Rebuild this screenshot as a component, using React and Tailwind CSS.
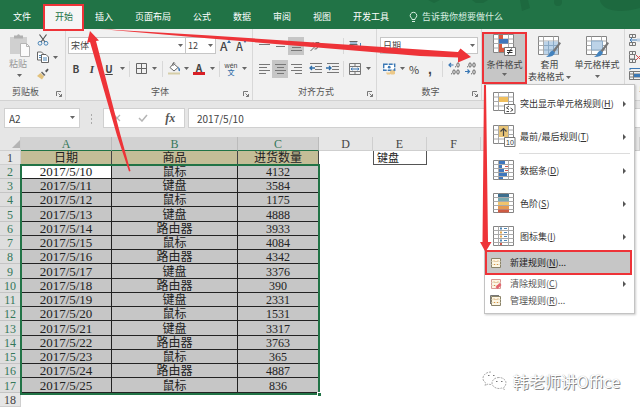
import React from "react";

const ROWS = [
  ["2017/5/10", "鼠标", "4132"],
  ["2017/5/11", "键盘", "3584"],
  ["2017/5/12", "鼠标", "1175"],
  ["2017/5/13", "键盘", "4888"],
  ["2017/5/14", "路由器", "3933"],
  ["2017/5/15", "鼠标", "4084"],
  ["2017/5/16", "路由器", "4342"],
  ["2017/5/17", "键盘", "3376"],
  ["2017/5/18", "路由器", "390"],
  ["2017/5/19", "键盘", "2331"],
  ["2017/5/20", "鼠标", "1531"],
  ["2017/5/21", "键盘", "3317"],
  ["2017/5/22", "路由器", "3763"],
  ["2017/5/23", "鼠标", "365"],
  ["2017/5/24", "路由器", "4887"],
  ["2017/5/25", "鼠标", "836"],
];

const TABS = ["插入", "页面布局", "公式", "数据", "审阅", "视图", "开发工具"];

/* ---------- small parts ---------- */

function Caret() {
  return (
    <svg width="5" height="3" viewBox="0 0 5 3" className="shrink-0" aria-hidden="true">
      <path d="M0 0h5L2.500 3z" fill="#666" />
    </svg>
  );
}

function CaretButton({ label }) {
  return (
    <button aria-label={label} className="flex h-4 w-2 shrink-0 items-center justify-center">
      <Caret />
    </button>
  );
}

function Tool({ label, active, wide, children }) {
  return (
    <button
      aria-label={label}
      className={`flex h-[18px] shrink-0 items-center justify-center ${wide ? "w-[18px]" : "w-4"} ${active ? "bg-[#c6c6c6]" : ""}`}
    >
      {children}
    </button>
  );
}

function Sep({ wide }) {
  return (
    <span className={`flex h-4 shrink-0 justify-center ${wide ? "w-2" : "w-1.5"}`}>
      <span className="w-px bg-[#d8d8d8]" />
    </span>
  );
}

function Launcher({ label }) {
  return (
    <button aria-label={label} className="absolute right-[3px] bottom-[3px]">
      <svg width="6" height="6" viewBox="0 0 6 6" fill="none" stroke="#777">
        <path d="M.5 5V.5H5M2.500 2.500l3 3M5.500 3v2.500H3" />
      </svg>
    </button>
  );
}

function Group({ title, className, children }) {
  return (
    <section className={`relative flex shrink-0 flex-col border-r border-[#d8d8d8] ${className}`}>
      {children}
      <div className="flex h-5 items-center justify-center pt-1 text-[#555]">{title}</div>
      <Launcher label={title + "设置"} />
    </section>
  );
}

function Row({ children }) {
  return <div className="flex h-[23px] items-center">{children}</div>;
}

function Dropdown({ label, value, className }) {
  return (
    <div className={`relative shrink-0 ${className}`}>
      <select
        aria-label={label}
        defaultValue={value}
        className="h-[17px] w-full appearance-none border border-[#c6c6c6] bg-white pl-0.5 leading-[14px] text-[#444]"
      >
        <option>{value}</option>
      </select>
      <span className="pointer-events-none absolute top-[7px] right-[3px]">
        <Caret />
      </span>
    </div>
  );
}

/* ---------- ribbon drawings ---------- */

function Lines({ d, h = 10 }) {
  return (
    <svg width="11" height={h} viewBox={`0 0 11 ${h}`} stroke="#777" fill="none" aria-hidden="true">
      <path d={d} />
    </svg>
  );
}

function PasteIcon() {
  return (
    <svg width="22" height="24" viewBox="0 0 22 24" aria-hidden="true">
      <path d="M1 3h17v17H1z" fill="#d0d0d0" />
      <path d="M5 3V1.500h3Q9.500-.8 11 1.500h3V4.500H5z" fill="#b0b0b0" />
      <path d="M11.500 9.500h6l3 3v10h-9z" fill="#fbfbfb" stroke="#b5b5b5" />
      <path d="M17.500 9.500v3h3" fill="none" stroke="#b5b5b5" />
    </svg>
  );
}

function CutIcon() {
  return (
    <svg width="12" height="12" viewBox="0 0 12 12" fill="none" aria-hidden="true">
      <path d="M2.500.5l5.500 7.500M9.500.5L4 8" stroke="#555" strokeWidth="1.200" />
      <circle cx="3" cy="9.300" r="1.900" stroke="#4a86b8" />
      <circle cx="9" cy="9.300" r="1.900" stroke="#4a86b8" />
    </svg>
  );
}

function CopyIcon() {
  return (
    <svg width="12" height="12" viewBox="0 0 12 12" fill="#fff" stroke="#666" aria-hidden="true">
      <path d="M.5 1h4l2 2v6h-6z" />
      <path d="M4.500 3.500h4.500l2.500 2.500v5.500h-7z" />
      <path d="M2 4.500h2M2 6.500h2M6 7h4M6 9h4" stroke="#4a86b8" />
    </svg>
  );
}

function BrushIcon() {
  return (
    <svg width="12" height="12" viewBox="0 0 12 12" aria-hidden="true">
      <path d="M8 3l2.500-2.500 1.200 1.200L9.500 4.500z" fill="#555" />
      <path d="M5 3.500l3.500 3.500-1.500 1L4 4.500z" fill="#666" />
      <path d="M3.500 5l3.500 3.500L5 11.500 0 8z" fill="#e3c27c" />
    </svg>
  );
}

function BorderIcon() {
  return (
    <svg width="11" height="11" viewBox="0 0 11 11" fill="none" stroke="#666" aria-hidden="true">
      <path d="M.5.5h10v10H.5zM5.500.5v10M.5 5.500h10" />
    </svg>
  );
}

function BucketIcon() {
  return (
    <svg width="13" height="13" viewBox="0 0 13 13" aria-hidden="true">
      <path d="M5.500 1.500l4.500 4-4 3.500-4-3.500z" fill="#fff" stroke="#666" />
      <path d="M5 4V1q1.500-1 2 .5" fill="none" stroke="#666" />
      <path d="M10 4.500q2.500 2 2 4.500-1 .5-1.500-.5z" fill="#3b78b5" />
      <path d="M0 10.500h12v2H0z" fill="#d6cea8" />
    </svg>
  );
}

function OrientIcon() {
  return (
    <svg width="12" height="12" viewBox="0 0 12 12" fill="none" stroke="#666" aria-hidden="true">
      <path d="M1.500 11l8-8M6.500 2.500h3.500V6" />
      <path d="M2 5.500q0-3 2.500-2.500t1 3q-2 1-2.500-1M5.500 9q3 .5 3-2" />
    </svg>
  );
}

function WrapIcon() {
  return (
    <svg width="13" height="12" viewBox="0 0 13 12" fill="none" aria-hidden="true">
      <path d="M.5 1.500h8M.5 4.500h8M.5 7.500h3" stroke="#666" />
      <path d="M1 3h7" stroke="#4a86b8" />
      <path d="M11.500 3v4.500H6M8 5.500l-2 2 2 2" stroke="#4a86b8" />
    </svg>
  );
}

function MergeIcon() {
  return (
    <svg width="12" height="12" viewBox="0 0 12 12" fill="none" aria-hidden="true">
      <path d="M.5.5h11v11H.5zM.5 3.500h11M.5 8.500h11M6 .5v3M6 8.500v3" stroke="#777" />
      <path d="M2 6h8M3.500 4.800L2 6l1.500 1.200M8.500 4.800L10 6 8.500 7.200" stroke="#3b78b5" />
    </svg>
  );
}

function IndentIcon({ out }) {
  return (
    <svg width="13" height="11" viewBox="0 0 13 11" fill="none" aria-hidden="true">
      <path d="M1 .5h12M6 3.500h7M6 6.500h7M1 9.500h12" stroke="#777" />
      <path d={out ? "M6 5H1M3 3L1 5l2 2" : "M0 5h5M3 3l2 2-2 2"} stroke="#2e6da8" strokeWidth="1.300" />
    </svg>
  );
}

function CurrencyIcon() {
  return (
    <svg width="13" height="12" viewBox="0 0 13 12" fill="none" aria-hidden="true">
      <rect x=".7" y="1.200" width="11" height="6" fill="#fff" stroke="#3b78b5" strokeWidth="1.400" strokeDasharray="4 1" />
      <circle cx="6.200" cy="4.200" r="1.400" fill="#3b78b5" />
      <path d="M7 8q2.500-1.500 5 0v3q-2.500 1.200-5 0zM3 9.500h4v2H4z" fill="#ecc98a" />
    </svg>
  );
}

function DecimalIcon({ increase }) {
  return (
    <svg width="13" height="13" viewBox="0 0 13 13" fill="none" aria-hidden="true">
      <path
        d={increase ? "M5.500 3H1M3 1L1 3l2 2" : "M1 9.500h4.500M3.500 7.500l2 2-2 2"}
        stroke="#3b78b5"
        strokeWidth="1.200"
      />
      {increase ? (
        <g stroke="#555" strokeWidth=".9">
          <ellipse cx="10" cy="3" rx="1.200" ry="2.200" />
          <ellipse cx="6" cy="10" rx="1.200" ry="2.200" />
          <ellipse cx="10" cy="10" rx="1.200" ry="2.200" />
          <path d="M7 4.800h1M3 11.800h1" />
        </g>
      ) : (
        <g stroke="#555" strokeWidth=".9">
          <ellipse cx="6" cy="3" rx="1.200" ry="2.200" />
          <ellipse cx="10" cy="3" rx="1.200" ry="2.200" />
          <ellipse cx="10" cy="10" rx="1.200" ry="2.200" />
          <path d="M3 4.800h1M7 11.800h1" />
        </g>
      )}
    </svg>
  );
}

function SheetBase({ children }) {
  return (
    <svg width="23" height="23" viewBox="0 0 23 23" fill="none" className="shrink-0" aria-hidden="true">
      <path d="M.5.5h20v18H.5z" fill="#fff" stroke="#858585" />
      <path d="M.5 5h20M.5 9.500h20M.5 14h20M5.500.5v18M15.500.5v18" stroke="#aaa" />
      {children}
    </svg>
  );
}

function CondFormatIcon() {
  return (
    <SheetBase>
      <path d="M6 1h4v4H6zM6 10h3v4H6zM6 14h5v4H6z" fill="#d8593f" />
      <path d="M6 5h9v4.500H6z" fill="#3f77bd" />
      <path d="M11.500 13.500h11v8h-11z" fill="#fff" stroke="#777" />
      <path d="M14 16.500h5.500M14 18.500h5.500M18.500 14.500l-3.500 6" stroke="#333" />
    </SheetBase>
  );
}

function BrushOver() {
  return (
    <>
      <path d="M21.500 6l1.500 1.200-6.500 9-2-1.500z" fill="#777" />
      <path d="M14.500 14.500l2.500 2q-1 4.500-9 4.500 3-1.500 3.500-4 1-2 3-2.500z" fill="#4382bd" />
    </>
  );
}

function TableFormatIcon() {
  return (
    <SheetBase>
      <path d="M6 5.500h14v13H6z" fill="#bcd3e8" />
      <path d="M6 9.500h14M6 14h14M10.500 5v13M15.500 5v13" stroke="#8aa9c5" />
      <BrushOver />
    </SheetBase>
  );
}

function CellStyleIcon() {
  return (
    <SheetBase>
      <path d="M5.500 5h11v9h-11z" fill="#bcd3e8" stroke="#8aa9c5" />
      <BrushOver />
    </SheetBase>
  );
}

function HighlightIcon() {
  return (
    <SheetBase>
      <path d="M6 5h9v5H6z" fill="#f0bf5d" />
      <path d="M11.500 12.500h10.500v9H11.500z" fill="#fff" stroke="#777" />
      <path d="M16 14l-2.500 1.800L16 17.500M13.500 19.500H16M17.500 16l2.500 1.800-2.500 1.700" stroke="#444" />
    </SheetBase>
  );
}

function TopIcon() {
  return (
    <SheetBase>
      <path d="M6 1h9v11H6z" fill="#e8c477" />
      <path d="M10.500 11V4M7.500 6.500l3-3 3 3" stroke="#444" strokeWidth="1.200" />
      <path d="M11.500 12.500h10.500v9H11.500z" fill="#fff" stroke="#777" />
      <text x="13" y="20" fontSize="7" fill="#333" stroke="none" className="font-['Liberation_Sans',sans-serif]">
        10
      </text>
    </SheetBase>
  );
}

function MenuSheet({ children }) {
  return (
    <svg width="23" height="23" viewBox="0 0 23 23" fill="none" className="shrink-0" aria-hidden="true">
      <path d="M.5 1.500h20v19H.5z" fill="#fff" stroke="#858585" />
      <path d="M.5 5.500h20M.5 9.500h20M.5 13.500h20M.5 17.500h20M5.500 1.500v19M15.500 1.500v19" stroke="#aaa" />
      {children}
    </svg>
  );
}

function DataBarIcon() {
  return (
    <MenuSheet>
      <path d="M6 2h6v3H6zM6 6h3v3H6zM6 10h5v3H6zM6 14h8v3H6zM6 18h4v2H6z" fill="#3f77bd" />
      <path d="M12 7.500h3M12 11.500h3" stroke="#d0584a" />
    </MenuSheet>
  );
}

function ColorScaleIcon() {
  return (
    <MenuSheet>
      <path d="M5 2h11v3H5z" fill="#3d6f8f" />
      <path d="M5 6h11v3H5z" fill="#78a9b0" />
      <path d="M5 10h11v3H5z" fill="#f0c46c" />
      <path d="M5 14h11v3H5z" fill="#e59a52" />
      <path d="M5 17.500h11v3H5z" fill="#cf5b43" />
    </MenuSheet>
  );
}

function IconSetIcon() {
  return (
    <MenuSheet>
      <path d="M7 2.500h2v2H7zM7 14.500h2v2H7z" fill="#4f86b5" />
      <path d="M7 6.500h2v2H7zM7 10.500h2v2H7z" fill="#e3a64b" />
      <path d="M7 18h2v2H7z" fill="#d0584a" />
      <path d="M11 3.500h3M11 7.500h3M11 11.500h3M11 15.500h3" stroke="#4f86b5" />
    </MenuSheet>
  );
}

function SmallRuleIcon({ kind }) {
  return (
    <svg width="12" height="12" viewBox="0 0 12 12" fill="none" className="shrink-0" aria-hidden="true">
      {kind === "manage" && <path d="M.5 9V.5H9" stroke="#777" />}
      <path d="M1.500 1.500h9v9h-9z" fill="#fdf6e4" stroke={kind === "clear" ? "#d99a94" : "#8a8368"} />
      <path d="M1.500 4.500h9M1.500 7.500h9" stroke="#e6dfc8" />
      <path d="M4 3.500l1 1M8 3.500l-1 1M4 8l1-1M8 8L7 7" stroke="#e0913a" />
      {kind === "clear" && <path d="M5.500 9l4-4 2 2-4 4z" fill="#e4626d" />}
    </svg>
  );
}

/* ---------- conditional formatting menu ---------- */

function Arrow() {
  return (
    <svg width="3" height="6" viewBox="0 0 3 6" className="ml-auto shrink-0" aria-hidden="true">
      <path d="M0 0l3 3-3 3z" fill="#555" />
    </svg>
  );
}

function BigItem({ icon, text, hotkey }) {
  return (
    <button role="menuitem" className="flex h-[33px] w-full items-center gap-1 pr-2 pl-2 text-[#333]">
      {icon}
      <span className="whitespace-nowrap">
        {text}(<u>{hotkey}</u>)
      </span>
      <Arrow />
    </button>
  );
}

function SmallItem({ kind, text, hotkey, more, arrow }) {
  return (
    <button role="menuitem" className="flex h-[17px] w-full items-center gap-2 pr-2 pl-[5px] text-[#555]">
      <SmallRuleIcon kind={kind} />
      <span>
        {text}(<u>{hotkey}</u>){more}
      </span>
      {arrow && <Arrow />}
    </button>
  );
}

function RuleMenu() {
  return (
    <div
      role="menu"
      className="absolute top-full left-0.5 z-10 w-[151px] border border-[#c3c3c3] bg-white pt-0.5 pb-1 shadow-[1px_1px_2px_rgba(0,0,0,0.2)]"
    >
      <BigItem icon={<HighlightIcon />} text="突出显示单元格规则" hotkey="H" />
      <BigItem icon={<TopIcon />} text="最前/最后规则" hotkey="T" />
      <hr className="mr-1 ml-[34px] border-[#dcdcdc]" />
      <BigItem icon={<DataBarIcon />} text="数据条" hotkey="D" />
      <BigItem icon={<ColorScaleIcon />} text="色阶" hotkey="S" />
      <BigItem icon={<IconSetIcon />} text="图标集" hotkey="I" />
      <button
        role="menuitem"
        className="relative -mt-[3px] flex h-[25px] w-[147px] items-center gap-2 border-2 border-[#ee3338] bg-[#c6c6c6] pl-[3px] text-[#222]"
      >
        <SmallRuleIcon kind="new" />
        <span>
          新建规则(<u>N</u>)...
        </span>
      </button>
      <SmallItem kind="clear" text="清除规则" hotkey="C" arrow />
      <SmallItem kind="manage" text="管理规则" hotkey="R" more="..." />
    </div>
  );
}

/* ---------- page sections ---------- */

function TabBar() {
  return (
    <nav className="relative flex h-[29px] items-stretch overflow-hidden bg-[#217346] text-white">
      <svg className="absolute top-0 right-0" width="260" height="29" viewBox="0 0 260 29" fill="#1d693f" aria-hidden="true">
        <path d="M220 0h40v8q-22 6-34 0-6-4-6-8z" />
        <circle cx="178" cy="2" r="4" />
        <path d="M92 0h16l-5 3h-7zM48 0h12l-6 3zM140 0h8l2 8-8 3z" />
      </svg>
      <button className="w-11 pt-1">文件</button>
      <button className="mt-1 w-10 bg-[#f5f5f5] text-[#217346]">开始</button>
      {TABS.map((t) => (
        <button key={t} className="relative px-[11px] pt-1 whitespace-nowrap">
          {t}
        </button>
      ))}
      <label className="relative flex min-w-0 flex-1 items-center gap-1 pt-1 pl-[9px]">
        <svg width="9" height="12" viewBox="0 0 9 12" fill="none" stroke="#d9efe2" className="shrink-0" aria-hidden="true">
          <path d="M3 8.500Q3 7 1.500 6A3.300 3.300 0 1 1 7.500 6Q6 7 6 8.500zM3 10.500h3" />
        </svg>
        <input
          aria-label="告诉我你想要做什么"
          placeholder="告诉我你想要做什么"
          className="h-4 w-full min-w-0 bg-transparent placeholder:text-[#d9efe2]"
        />
      </label>
    </nav>
  );
}

function Ribbon() {
  return (
    <div className="flex h-[72px] border-b border-[#d2d2d2] bg-[#f1f1f1] text-[#444]">
      <section className="relative flex w-[66px] shrink-0 flex-col border-r border-[#d8d8d8] pt-[5px]">
        <div className="flex h-[46px] gap-1.5 pl-[9px]">
          <button className="flex w-[22px] flex-col items-start text-[#999]">
            <PasteIcon />
            <span className="leading-3 whitespace-nowrap">粘贴</span>
            <span className="pt-1 pl-2">
              <Caret />
            </span>
          </button>
          <div className="flex flex-col justify-between">
            <button aria-label="剪切">
              <CutIcon />
            </button>
            <button aria-label="复制" className="flex items-center gap-1">
              <CopyIcon />
              <Caret />
            </button>
            <button aria-label="格式刷">
              <BrushIcon />
            </button>
          </div>
        </div>
        <div className="flex h-5 items-center pt-1 pl-3 text-[#555]">剪贴板</div>
        <Launcher label="剪贴板设置" />
      </section>

      <Group title="字体" className="w-[187px] pt-[5px] pl-0.5">
        <Row>
          <Dropdown label="字体" value="宋体" className="w-[118px]" />
          <Dropdown label="字号" value="12" className="-ml-px w-[31px]" />
          <button aria-label="增大字号" className="ml-1 flex w-4 items-start text-[12px] leading-3 font-medium">
            A
            <svg width="4" height="3" viewBox="0 0 4 3" aria-hidden="true">
              <path d="M0 3l2-3 2 3z" fill="#2e6da8" />
            </svg>
          </button>
          <button aria-label="减小字号" className="flex w-4 items-start text-[11px] leading-3 font-medium">
            A
            <svg width="4" height="3" viewBox="0 0 4 3" aria-hidden="true">
              <path d="M0 0l2 3 2-3z" fill="#2e6da8" />
            </svg>
          </button>
        </Row>
        <Row>
          <Tool label="加粗">
            <b className="text-[10px]">B</b>
          </Tool>
          <Tool label="倾斜">
            <i className="font-['Liberation_Serif',serif] text-[11px] font-bold">I</i>
          </Tool>
          <Tool label="下划线" wide>
            <u className="text-[10px] font-bold">U</u>
          </Tool>
          <CaretButton label="下划线选项" />
          <Sep />
          <Tool label="边框" wide>
            <BorderIcon />
          </Tool>
          <CaretButton label="边框选项" />
          <Sep wide />
          <Tool label="填充颜色">
            <BucketIcon />
          </Tool>
          <CaretButton label="填充颜色选项" />
          <Tool label="字体颜色" wide>
            <span className="h-3 w-3 border-b-[3px] border-[#d81f26] text-[10px] leading-[9px] font-bold">A</span>
          </Tool>
          <CaretButton label="字体颜色选项" />
          <Sep />
          <Tool label="拼音" wide>
            <span className="flex flex-col items-center text-[7px] leading-[7px] font-medium">
              <span className="font-['Liberation_Sans',sans-serif]">wén</span>
              <span className="text-[#2e6da8]">文</span>
            </span>
          </Tool>
          <CaretButton label="拼音选项" />
        </Row>
      </Group>

      <Group title="对齐方式" className="w-[124px] pt-[5px] pl-[3px]">
        <Row>
          <Tool label="顶端对齐">
            <Lines d="M1 .5h9M0 3.500h11" />
          </Tool>
          <Tool label="垂直居中">
            <Lines d="M0 2.500h11M1 5.500h9" />
          </Tool>
          <Tool label="底端对齐" active>
            <Lines d="M0 3.500h11M1 6.500h9M0 9.500h11" />
          </Tool>
          <span className="w-0.5" />
          <Tool label="方向" wide>
            <OrientIcon />
          </Tool>
          <span className="w-4" />
          <Sep />
          <Tool label="自动换行" wide>
            <WrapIcon />
          </Tool>
        </Row>
        <Row>
          <Tool label="左对齐">
            <Lines d="M0 .5h11M0 3.500h8M0 6.500h11M0 9.500h7" />
          </Tool>
          <Tool label="居中" active>
            <Lines d="M0 .5h11M2 3.500h7M0 6.500h11M2 9.500h7" />
          </Tool>
          <Tool label="右对齐">
            <Lines d="M0 .5h11M3 3.500h8M0 6.500h11M4 9.500h7" />
          </Tool>
          <span className="w-0.5" />
          <Tool label="减少缩进" wide>
            <IndentIcon out />
          </Tool>
          <Tool label="增加缩进">
            <IndentIcon />
          </Tool>
          <Sep />
          <Tool label="合并后居中" wide>
            <MergeIcon />
          </Tool>
          <CaretButton label="合并选项" />
        </Row>
      </Group>

      <Group title="数字" className="w-[105px] pt-[5px] pl-[3px]">
        <Row>
          <Dropdown label="数字格式" value="日期" className="w-[98px]" />
        </Row>
        <Row>
          <Tool label="会计数字格式" wide>
            <CurrencyIcon />
          </Tool>
          <CaretButton label="会计选项" />
          <Tool label="百分比样式">
            <span className="text-[11px]">%</span>
          </Tool>
          <Tool label="千位分隔样式">
            <b className="font-['Liberation_Sans',sans-serif] text-[14px] leading-3">,</b>
          </Tool>
          <Sep wide />
          <Tool label="增加小数位数">
            <DecimalIcon increase />
          </Tool>
          <Tool label="减少小数位数">
            <DecimalIcon />
          </Tool>
        </Row>
      </Group>

      <section className="flex shrink-0 border-r border-[#d8d8d8] pr-0.5">
        <div className="relative mt-[3px] h-[52px]">
          <button className="flex h-full w-[45px] flex-col items-center border-2 border-[#ee3338] bg-[#c6c6c6]">
            <CondFormatIcon />
            <span className="pt-0.5 leading-3 whitespace-nowrap">条件格式</span>
            <span className="pt-0.5">
              <Caret />
            </span>
          </button>
          <RuleMenu />
        </div>
        <button className="flex w-[45px] flex-col items-center pt-[7px]">
          <TableFormatIcon />
          <span className="leading-3">套用</span>
          <span className="flex items-center gap-0.5 leading-3 whitespace-nowrap">
            表格格式
            <Caret />
          </span>
        </button>
        <button className="flex w-[50px] flex-col items-center pt-[7px]">
          <CellStyleIcon />
          <span className="leading-3 whitespace-nowrap">单元格样式</span>
          <span className="pt-1">
            <Caret />
          </span>
        </button>
      </section>

      <section className="flex min-w-0 flex-1 flex-col overflow-hidden pt-[5px] pl-1">
        <div className="flex h-[46px] flex-col justify-between">
          <button aria-label="插入单元格">
            <svg width="14" height="12" viewBox="0 0 14 12" fill="none" aria-hidden="true">
              <path d="M.5.5h6v3h-6zM.5 8.500h6v3h-6zM3.500.5v3M3.500 8.500v3" stroke="#777" />
              <path d="M8 6H1M3 4L1 6l2 2" stroke="#3b78b5" />
              <path d="M8 4.500h5v3H8z" fill="#b9cfe4" />
            </svg>
          </button>
          <button aria-label="删除单元格">
            <svg width="14" height="12" viewBox="0 0 14 12" fill="none" aria-hidden="true">
              <path d="M.5.5h6v3h-6zM.5 8.500h6v3h-6zM3.500.5v3M3.500 8.500v3M.5 4v4h5V4" stroke="#777" />
              <path d="M7 4l5 5M12 4L7 9" stroke="#d84b4b" />
            </svg>
          </button>
          <button aria-label="单元格格式">
            <svg width="14" height="12" viewBox="0 0 14 12" fill="none" aria-hidden="true">
              <path d="M1 .5h12M1 0v2" stroke="#3b78b5" />
              <path d="M.5 3.500h13v8H.5zM.5 6h13M.5 9h13M4.500 3.500v8" stroke="#777" />
              <path d="M5 6h9v3H5z" fill="#3b78b5" />
            </svg>
          </button>
        </div>
        <div className="h-5 pt-1 pl-2.5 whitespace-nowrap text-[#555]">单元格</div>
      </section>
    </div>
  );
}

function FormulaBar() {
  return (
    <div className="flex h-9 items-start bg-[#e6e6e6] pt-[7px] pl-1">
      <label className="relative w-[76px] shrink-0">
        <input
          aria-label="名称框"
          defaultValue="A2"
          className="h-5 w-full border border-[#d0d0d0] bg-white pl-1 text-[10px] text-[#444]"
        />
        <span className="absolute top-2 right-[5px]">
          <Caret />
        </span>
      </label>
      <svg width="23" height="20" viewBox="0 0 23 20" fill="#aaa" className="shrink-0" aria-hidden="true">
        <path d="M11 6h1v2h-1zM11 10h1v2h-1zM11 14h1v2h-1z" />
      </svg>
      <div className="flex h-5 w-[82px] shrink-0 items-center justify-around border border-[#d0d0d0] bg-white">
        <button aria-label="取消">
          <svg width="8" height="8" viewBox="0 0 8 8" stroke="#b5b5b5" strokeWidth="1.300">
            <path d="M1 1l6 6M7 1L1 7" />
          </svg>
        </button>
        <button aria-label="输入">
          <svg width="10" height="8" viewBox="0 0 10 8" fill="none" stroke="#b5b5b5" strokeWidth="1.500">
            <path d="M1 4l3 3 5-6" />
          </svg>
        </button>
        <button aria-label="插入函数" className="font-['Liberation_Serif',serif] text-[12px] leading-4 font-bold text-[#555] italic">
          fx
        </button>
      </div>
      <input
        aria-label="编辑栏"
        defaultValue="2017/5/10"
        className="ml-[3px] h-5 min-w-0 flex-1 border border-r-0 border-[#d0d0d0] bg-white pl-2 text-[10px] text-[#444]"
      />
    </div>
  );
}

const HEAD = "border-r border-b border-[#cfcfcf] bg-[#e6e6e6] p-0 text-center font-normal text-[#444]";

function Sheet() {
  const data = "border-r border-b border-[#222] bg-[#c6c6c6] p-0 text-center";
  return (
    <div className="relative flex-1 bg-white">
      <table className="w-full table-fixed border-separate border-spacing-0 font-['Liberation_Serif','Noto_Sans_CJK_SC',serif] text-[12px] leading-3 text-[#222] [&_td]:pt-px [&_th]:pt-px">
        <colgroup>
          <col className="w-[21px]" />
          <col className="w-[91px]" />
          <col className="w-[126px]" />
          <col className="w-[81px]" />
          <col className="w-[54px]" />
          <col className="w-[54px]" />
          <col className="w-[54px]" />
          <col />
          <col />
        </colgroup>
        <thead>
          <tr className="h-[14px]">
            <th aria-label="全选" className={HEAD}>
              <svg width="8" height="8" viewBox="0 0 8 8" className="ml-auto" aria-hidden="true">
                <path d="M8 0v8H0z" fill="#b4b4b4" />
              </svg>
            </th>
            {["A", "B", "C"].map((c) => (
              <th key={c} className="border-r border-b border-r-[#bbb] border-b-[#217346] bg-[#d2d2d2] p-0 font-normal text-[#35785a]">
                {c}
              </th>
            ))}
            {["D", "E", "F", "G", "H"].map((c) => (
              <th key={c} className={HEAD}>
                {c}
              </th>
            ))}
          </tr>
        </thead>
        <tbody>
          <tr className="h-[14px]">
            <th className={HEAD}>1</th>
            {["日期", "商品", "进货数量"].map((c) => (
              <td key={c} className="border-r border-b border-[#444] bg-[#c4bd97] p-0 text-center">
                {c}
              </td>
            ))}
            <td className="p-0" />
            <td className="border-x border-b border-[#555] p-0 pl-[3px] text-[11px]">键盘</td>
            <td colSpan={3} className="p-0" />
          </tr>
          {ROWS.map(([date, item, count], i) => (
            <tr key={date} className={i % 4 === 3 ? "h-[15px]" : "h-[14px]"}>
              <th className="border-r border-b border-r-[#217346] border-b-[#c4c4c4] bg-[#dedede] p-0 font-normal text-[#35785a]">
                {i + 2}
              </th>
              <td className={`border-r border-b border-[#222] p-0 text-center text-[13px] ${i === 0 ? "bg-white" : "bg-[#c6c6c6]"}`}>
                {date}
              </td>
              <td className={data}>{item}</td>
              <td className={data}>{count}</td>
              <td colSpan={5} className="p-0" />
            </tr>
          ))}
          <tr className="h-[14px]">
            <th className={HEAD}>18</th>
            <td colSpan={8} className="p-0" />
          </tr>
        </tbody>
      </table>
      <div className="pointer-events-none absolute top-[27px] left-5 h-[231px] w-[300px] border-2 border-[#217346]">
        <span className="absolute -right-[3px] -bottom-[3px] h-1 w-1 border-t border-l border-white bg-[#217346]" />
      </div>
    </div>
  );
}

function Annotations() {
  return (
    <svg
      className="pointer-events-none absolute top-0 left-0 z-20"
      width="640"
      height="408"
      viewBox="0 0 640 408"
      fill="#ee3338"
      aria-hidden="true"
    >
      <rect x="44" y="5" width="39" height="25" fill="none" stroke="#ee3338" strokeWidth="2" />
      <path d="M90 31l9 9.500-3 .5 24.500 94 10 36-1.500.5-12-36L90 42l-3 1z" />
      <path d="M100 29l110 6.500L458 52l2.500-3.500L471 57l-13 5.500v-5L420 56 210 38.500z" />
      <path d="M484 85h2l2 157h3.500L485.500 252 480 242h2.500z" />
    </svg>
  );
}

function Watermark() {
  return (
    <div className="pointer-events-none absolute right-5 bottom-[17px] flex items-center gap-1.5 text-[16px] leading-5 text-white [text-shadow:1px_1px_0_#888,0_0_1px_#aaa]">
      <svg width="25" height="20" viewBox="0 0 25 20" fill="#fff" stroke="#aaa" strokeDasharray="2 1" aria-hidden="true">
        <path d="M9 1C4.500 1 1 3.800 1 7.300c0 2 1 3.500 2.800 4.700L3 14.500l3-1.500q2 .6 4 .5" />
        <path d="M17 6.500c-4 0-7 2.500-7 5.500s3 5.500 7 5.500q1.500 0 2.800-.5l2.700 1.500-.7-2.300C23.200 15.200 24 13.800 24 12c0-3-3-5.500-7-5.500z" />
        <path d="M6 4.500h1.500M11 4.500h1.500M14 10.500h1.500M19 10.500h1.500" stroke="#777" />
      </svg>
      韩老师讲Office
    </div>
  );
}

export default function App() {
  return (
    <main className="relative flex min-h-screen flex-col overflow-hidden bg-white font-['Noto_Sans_CJK_SC',sans-serif] text-[9px] leading-3">
      <TabBar />
      <Ribbon />
      <FormulaBar />
      <Sheet />
      <Annotations />
      <Watermark />
    </main>
  );
}
